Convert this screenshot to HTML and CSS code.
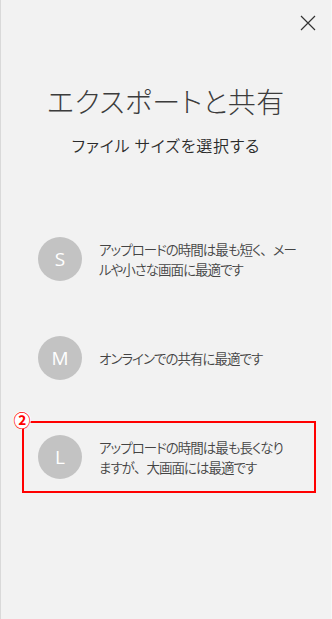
FILE: index.html
```html
<!DOCTYPE html>
<html lang="ja">
<head>
<meta charset="utf-8">
<title>エクスポートと共有</title>
<link rel="stylesheet" href="styles.css">
</head>
<body>
<div class="panel">
  <header class="topbar">
    <button class="close" aria-label="閉じる">
      <svg width="16" height="16" viewBox="0 0 16 16"><path d="M1 1 L15 15 M15 1 L1 15" stroke="#333" stroke-width="1.2" fill="none"/></svg>
    </button>
  </header>
  <h1 class="title">エクスポートと共有</h1>
  <p class="subtitle">ファイル サイズを選択する</p>
  <ul class="sizes">
    <li class="size">
      <span class="letter">S</span>
      <span class="desc">アップロードの時間は最も短く<span class="punct">、</span>メー<br>ルや小さな画面に最適です</span>
    </li>
    <li class="size">
      <span class="letter">M</span>
      <span class="desc">オンラインでの共有に最適です</span>
    </li>
    <li class="size marked">
      <span class="marker">②</span>
      <span class="letter">L</span>
      <span class="desc">アップロードの時間は最も長くなり<br>ますが<span class="punct">、</span>大画面には最適です</span>
    </li>
  </ul>
</div>
</body>
</html>
```
FILE: styles.css
```css
html, body {
  margin: 0;
  padding: 0;
  background: #f2f2f2;
}
body {
  font-family: "Noto Sans CJK JP", "Noto Sans", sans-serif;
  color: #333;
}
.panel {
  box-sizing: border-box;
  width: 332px;
  height: 619px;
  border-left: 1px solid #d9d9d9;
  border-right: 1px solid #f7f7f7;
  display: flex;
  flex-direction: column;
}
.topbar {
  height: 45px;
  box-sizing: border-box;
  padding: 15px 15px 0 0;
  display: flex;
  justify-content: flex-end;
}
.close {
  width: 16px;
  height: 16px;
  padding: 0;
  border: 0;
  background: none;
  display: flex;
}
.title {
  margin: 38px 0 0;
  text-align: center;
  font-size: 28px;
  line-height: 36px;
  font-weight: 300;
  color: #3c3c3c;
  font-feature-settings: "palt";
  letter-spacing: 0.5px;
}
.subtitle {
  margin: 14px 0 0;
  text-align: center;
  font-size: 16px;
  line-height: 24px;
  font-weight: 350;
  color: #2b2b2b;
  font-feature-settings: "palt";
  letter-spacing: 0.8px;
}
.sizes {
  list-style: none;
  margin: 66px 0 0 21px;
  padding: 0;
  width: 294px;
  display: flex;
  flex-direction: column;
  gap: 27px;
}
.size {
  position: relative;
  box-sizing: border-box;
  height: 72px;
  border: 2px solid transparent;
  padding: 0 4px 0 14px;
  display: flex;
  align-items: center;
  gap: 17px;
}
.size.marked {
  border-color: #ff0000;
}
.letter {
  flex: none;
  width: 44px;
  height: 44px;
  border-radius: 50%;
  background: #c3c3c3;
  color: #fff;
  font-family: "Open Sans", "Noto Sans", sans-serif;
  font-size: 19px;
  line-height: 44px;
  text-align: center;
}
.desc {
  font-size: 13.5px;
  line-height: 20px;
  font-weight: 350;
  color: #444;
  white-space: nowrap;
  font-feature-settings: "palt";
  letter-spacing: -1px;
}
.punct {
  font-feature-settings: normal;
}
.marker {
  position: absolute;
  left: -11px;
  top: -12px;
  width: 18px;
  height: 18px;
  border-radius: 50%;
  background: #fff;
  color: #ff0000;
  font-size: 17px;
  font-weight: 700;
  line-height: 18px;
  text-align: center;
}
```
